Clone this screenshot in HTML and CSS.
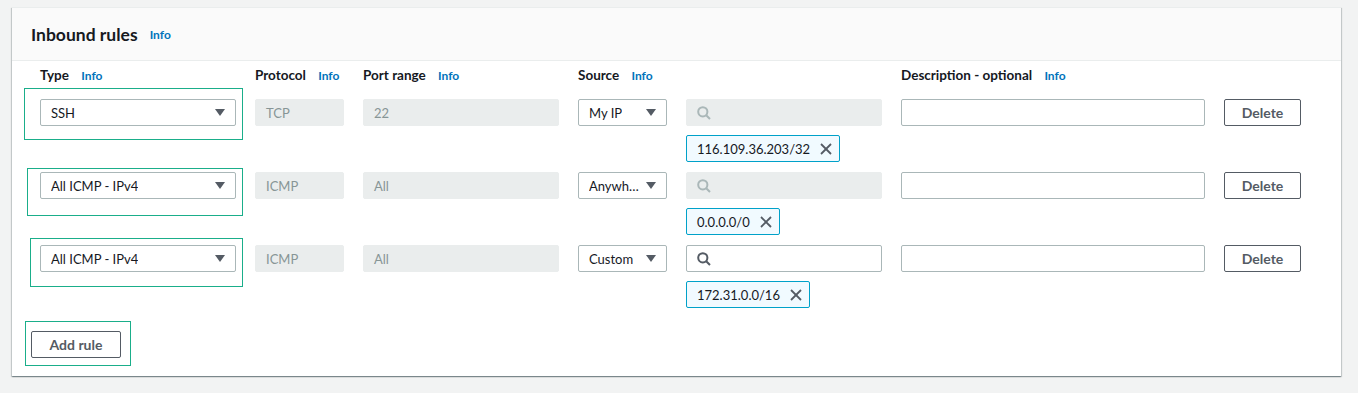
FILE: index.html
```html
<html>

<head>
    <link rel="stylesheet" href="styles.css">
</head>

<body>
    <div class="page">
        <section class="card">
            <header class="card-header">
                <h2>Inbound rules</h2>
                <a class="info">Info</a>
            </header>

            <div class="card-body">
                <div class="rules">
                    <div class="col-head">Type <a class="info">Info</a></div>
                    <div class="col-head">Protocol <a class="info">Info</a></div>
                    <div class="col-head">Port range <a class="info">Info</a></div>
                    <div class="col-head span-2">Source <a class="info">Info</a></div>
                    <div class="col-head">Description - optional <a class="info">Info</a></div>
                    <div class="col-head"></div>

                    <!-- rule 1 -->
                    <div class="cell">
                        <span class="hl hl-1"></span>
                        <div class="select"><span class="select-text">SSH</span><svg class="caret" viewBox="0 0 10 7"><polygon points="0,0 10,0 5,7" /></svg></div>
                    </div>
                    <div class="cell"><div class="input disabled">TCP</div></div>
                    <div class="cell"><div class="input disabled">22</div></div>
                    <div class="cell"><div class="select"><span class="select-text">My IP</span><svg class="caret" viewBox="0 0 10 7"><polygon points="0,0 10,0 5,7" /></svg></div></div>
                    <div class="cell stack">
                        <div class="input disabled search"><svg class="search-icon" viewBox="0 0 14 14"><circle cx="5.8" cy="5.8" r="4.6" /><line x1="9.2" y1="9.2" x2="13" y2="13" /></svg></div>
                        <div class="token">116.109.36.203/32<svg class="token-x" viewBox="0 0 12 12"><line x1="1" y1="1" x2="11" y2="11" /><line x1="11" y1="1" x2="1" y2="11" /></svg></div>
                    </div>
                    <div class="cell"><div class="input"></div></div>
                    <div class="cell"><button class="btn">Delete</button></div>

                    <!-- rule 2 -->
                    <div class="cell">
                        <span class="hl hl-2"></span>
                        <div class="select"><span class="select-text">All ICMP - IPv4</span><svg class="caret" viewBox="0 0 10 7"><polygon points="0,0 10,0 5,7" /></svg></div>
                    </div>
                    <div class="cell"><div class="input disabled">ICMP</div></div>
                    <div class="cell"><div class="input disabled">All</div></div>
                    <div class="cell"><div class="select"><span class="select-text">Anywh…</span><svg class="caret" viewBox="0 0 10 7"><polygon points="0,0 10,0 5,7" /></svg></div></div>
                    <div class="cell stack">
                        <div class="input disabled search"><svg class="search-icon" viewBox="0 0 14 14"><circle cx="5.8" cy="5.8" r="4.6" /><line x1="9.2" y1="9.2" x2="13" y2="13" /></svg></div>
                        <div class="token">0.0.0.0/0<svg class="token-x" viewBox="0 0 12 12"><line x1="1" y1="1" x2="11" y2="11" /><line x1="11" y1="1" x2="1" y2="11" /></svg></div>
                    </div>
                    <div class="cell"><div class="input"></div></div>
                    <div class="cell"><button class="btn">Delete</button></div>

                    <!-- rule 3 -->
                    <div class="cell">
                        <span class="hl hl-3"></span>
                        <div class="select"><span class="select-text">All ICMP - IPv4</span><svg class="caret" viewBox="0 0 10 7"><polygon points="0,0 10,0 5,7" /></svg></div>
                    </div>
                    <div class="cell"><div class="input disabled">ICMP</div></div>
                    <div class="cell"><div class="input disabled">All</div></div>
                    <div class="cell"><div class="select"><span class="select-text">Custom</span><svg class="caret" viewBox="0 0 10 7"><polygon points="0,0 10,0 5,7" /></svg></div></div>
                    <div class="cell stack">
                        <div class="input search"><svg class="search-icon" viewBox="0 0 14 14"><circle cx="5.8" cy="5.8" r="4.6" /><line x1="9.2" y1="9.2" x2="13" y2="13" /></svg></div>
                        <div class="token">172.31.0.0/16<svg class="token-x" viewBox="0 0 12 12"><line x1="1" y1="1" x2="11" y2="11" /><line x1="11" y1="1" x2="1" y2="11" /></svg></div>
                    </div>
                    <div class="cell"><div class="input"></div></div>
                    <div class="cell"><button class="btn">Delete</button></div>
                </div>

                <div class="add-row">
                    <span class="hl hl-add"></span>
                    <button class="btn btn-add">Add rule</button>
                </div>
            </div>
        </section>
    </div>
</body>

</html>
```

FILE: styles.css
```css
body {
    margin: 0;
    background: #f2f3f3;
    font-family: Lato, "Open Sans", sans-serif;
    font-size: 14px;
    color: #16191f;
}

.page {
    padding: 7px 17px 0 12px;
}

.card {
    background: #fff;
    border-top: 1px solid #eaeded;
    box-shadow: 0 1px 1px 0 rgba(0, 28, 36, .3),
        1px 1px 1px 0 rgba(0, 28, 36, .15),
        -1px 1px 1px 0 rgba(0, 28, 36, .15);
}

.card-header {
    display: flex;
    align-items: center;
    height: 52px;
    padding: 0 19px;
    background: #fafafa;
    border-bottom: 1px solid #eaeded;
}

.card-header h2 {
    margin: 0 12px 0 0;
    font-size: 17.5px;
    font-weight: 700;
    line-height: 22px;
    padding-top: 1px;
}

.info {
    color: #0073bb;
    font-size: 12px;
    font-weight: 700;
    cursor: pointer;
}

.col-head .info {
    margin-left: 9px;
}

.card-body {
    padding: 4px 19px 18px 19px;
}

.rules {
    display: grid;
    grid-template-columns: 196px 89px 196px 89px 196px 304px 77px;
    column-gap: 19px;
    row-gap: 10px;
    align-items: start;
    padding-left: 9px;
}

.col-head {
    font-size: 13.5px;
    font-weight: 700;
    line-height: 20px;
    height: 20px;
    margin-bottom: 4px;
    white-space: nowrap;
}

.col-head.span-2 {
    grid-column: span 2;
}

.cell {
    position: relative;
}

.stack {
    display: flex;
    flex-direction: column;
    align-items: flex-start;
    gap: 9px;
}

.select,
.input {
    box-sizing: border-box;
    height: 27px;
    width: 100%;
    border: 1px solid #aab7b8;
    border-radius: 2px;
    background: #fff;
    display: flex;
    align-items: center;
    padding: 0 10px;
    font-size: 13px;
    line-height: 20px;
}

.select {
    justify-content: space-between;
}

.select-text {
    white-space: nowrap;
    overflow: hidden;
    text-overflow: ellipsis;
}

.caret {
    width: 10px;
    height: 7px;
    flex: none;
    margin-left: 6px;
    fill: #545b64;
}

.input.disabled {
    background: #eaeded;
    border-color: #eaeded;
    color: #879596;
}

.search-icon {
    width: 14px;
    height: 14px;
    fill: none;
    stroke: #545b64;
    stroke-width: 2;
}

.disabled .search-icon {
    stroke: #aab7b8;
}

.token {
    box-sizing: border-box;
    height: 27px;
    display: flex;
    align-items: center;
    padding: 0 7px 0 10px;
    border: 1px solid #00a1c9;
    border-radius: 2px;
    background: #f1faff;
    font-size: 13px;
}

.token-x {
    width: 12px;
    height: 12px;
    margin-left: 10px;
    stroke: #545b64;
    stroke-width: 1.8;
}

.btn {
    box-sizing: border-box;
    height: 27px;
    width: 77px;
    border: 1px solid #545b64;
    border-radius: 2px;
    background: #fff;
    color: #545b64;
    font-family: inherit;
    font-size: 14px;
    font-weight: 700;
    padding: 0;
}

.add-row {
    position: relative;
    margin-top: 23px;
    width: 90px;
}

.btn-add {
    width: 90px;
    display: block;
}

/* green review markers drawn over the form */
.hl {
    position: absolute;
    border: 1px solid #1aae8a;
    pointer-events: none;
}

.hl-1 {
    left: -16px;
    top: -11px;
    right: -7px;
    bottom: -14px;
}

.hl-2 {
    left: -13px;
    top: -4px;
    right: -7px;
    bottom: -17px;
}

.hl-3 {
    left: -10px;
    top: -7px;
    right: -7px;
    bottom: -15px;
}

.hl-add {
    left: -6px;
    top: -10px;
    right: -10px;
    bottom: -8px;
}
```
